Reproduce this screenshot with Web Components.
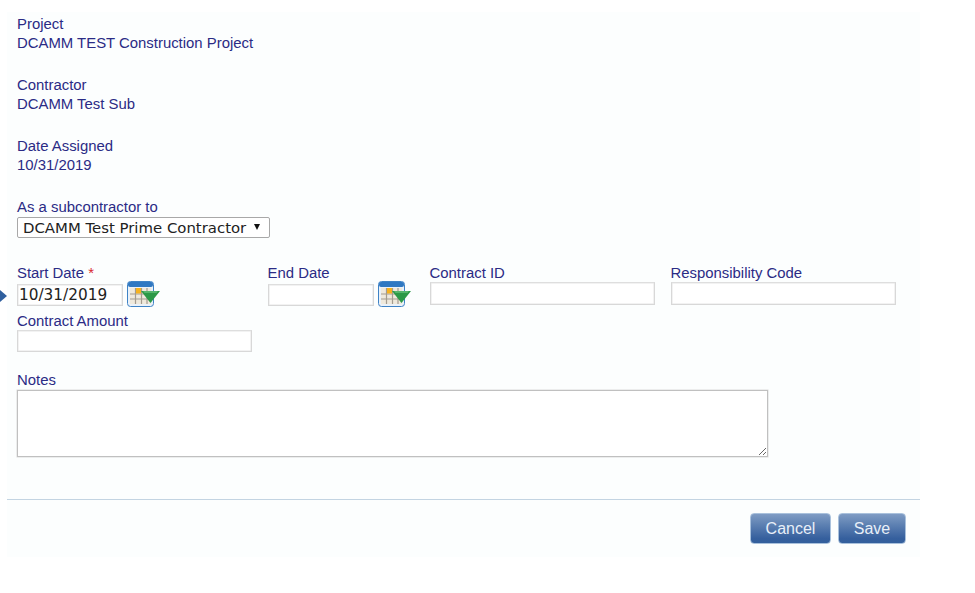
<!DOCTYPE html>
<html>
<head>
<meta charset="utf-8">
<title>Contract</title>
<style>
    html, body { margin: 0; padding: 0; background: #fff; }
    body { font: 14.9px/19px "Liberation Sans", Arial, sans-serif; color: #2b2b85; }
</style>
</head>
<body>
<contract-form>
    <read-field label="Project">DCAMM TEST Construction Project</read-field>
    <read-field label="Contractor">DCAMM Test Sub</read-field>
    <read-field label="Date Assigned">10/31/2019</read-field>
</contract-form>

<script>
const calendarSvg = `
<svg width="33" height="26" viewBox="0 0 33 26">
    <rect x="0.5" y="0.5" width="26" height="25" rx="3" fill="#eaf1f8" stroke="#3f83c6"/>
    <rect x="1" y="1" width="25" height="5" rx="2" fill="#2f78c2"/>
    <rect x="3" y="7" width="21" height="16" fill="#efe9dc"/>
    <path d="M3 13H24M3 18H24M8.5 7V23M14.5 7V23M20 7V23" stroke="#a39c90" stroke-width="1.2" fill="none"/>
    <rect x="9" y="7" width="5" height="5.5" fill="#f6b21f"/>
    <path d="M14 10H33L23.5 22Z" fill="#2c9947"/>
    <path d="M16 10H31L29.5 12H17.5Z" fill="#55b56c"/>
</svg>`;

class ReadField extends HTMLElement {
    constructor() {
        super();
        this.attachShadow({ mode: "open" }).innerHTML = `
            <style>:host { display: block; margin-bottom: 23px; }</style>
            <div>${this.getAttribute("label")}</div>
            <div><slot></slot></div>`;
    }
}

class InputField extends HTMLElement {
    constructor() {
        super();
        const required = this.hasAttribute("required") ? ' <span class="req">*</span>' : "";
        const date = this.hasAttribute("date");
        this.attachShadow({ mode: "open" }).innerHTML = `
            <style>
                :host { display: block; width: var(--w); }
                .label { height: var(--lh, 18px); }
                .req { color: #d9282f; }
                .wrap { position: relative; }
                .row { display: flex; align-items: flex-start; }
                input {
                    box-sizing: border-box;
                    width: var(--iw);
                    height: var(--ih, 23px);
                    margin: 0;
                    padding: 0 1px 0 1px;
                    background: #fff;
                    border: 1px solid #d8d8d8;
                    border-top-color: #dedede;
                    box-shadow: inset 0 0 0 0.5px #e6e6e6;
                    font: 15.3px "DejaVu Sans", Verdana, sans-serif;
                    color: #222;
                    outline: none;
                }
                .date { box-sizing: border-box; padding-top: 2px; height: 26px; }
                .date input { height: 22px; }
                .cal { display: block; margin: -3px 0 0 4px; height: 26px; }
                .pointer {
                    position: absolute; left: -17px; top: 8px;
                    border-left: 7px solid #2f5f9e;
                    border-top: 6.5px solid transparent;
                    border-bottom: 6.5px solid transparent;
                }
            </style>
            <div class="label">${this.getAttribute("label")}${required}</div>
            <div class="wrap">
                ${this.hasAttribute("current") ? '<span class="pointer"></span>' : ""}
                <div class="row ${date ? "date" : ""}">
                    <input value="${this.getAttribute("value") || ""}">
                    ${date ? `<span class="cal">${calendarSvg}</span>` : ""}
                </div>
            </div>`;
    }
}

class ActionButton extends HTMLElement {
    constructor() {
        super();
        this.attachShadow({ mode: "open" }).innerHTML = `
            <style>
                :host {
                    display: block;
                    box-sizing: border-box;
                    height: 31px;
                    width: var(--w);
                    text-align: center;
                    line-height: 29px;
                    font-size: 16px;
                    color: #e8eff8;
                    border: 1px solid #a9c1dc;
                    border-radius: 4px;
                    background: linear-gradient(#7f9cc4, #5f82b3 35%, #355f9d 85%, #33609d);
                }
            </style>
            <slot></slot>`;
    }
}

class SubcontractorSelect extends HTMLElement {
    constructor() {
        super();
        this.attachShadow({ mode: "open" }).innerHTML = `
            <style>
                :host { display: block; position: relative; width: 253px; }
                select {
                    display: block;
                    appearance: none;
                    -webkit-appearance: none;
                    box-sizing: border-box;
                    width: 253px;
                    height: 21px;
                    margin: 0;
                    padding: 0 0 0 5px;
                    background: #fff;
                    border: 1px solid #a8a8a8;
                    border-radius: 2px;
                    font: 14.9px "DejaVu Sans", Verdana, sans-serif;
                    color: #222;
                    outline: none;
                }
                .arrow {
                    position: absolute; left: 237px; top: 7px;
                    border-top: 6px solid #111;
                    border-left: 3.5px solid transparent;
                    border-right: 3.5px solid transparent;
                }
            </style>
            <select><option>DCAMM Test Prime Contractor</option></select>
            <span class="arrow"></span>`;
    }
}

class ContractForm extends HTMLElement {
    constructor() {
        super();
        this.attachShadow({ mode: "open" }).innerHTML = `
            <style>
                :host {
                    display: block;
                    box-sizing: border-box;
                    width: 913px;
                    height: 545px;
                    margin: 12px 0 0 7px;
                    background: #fcfefe;
                }
                .body { padding: 3px 0 0 10px; height: 487px; box-sizing: border-box; }
                .sub { margin-bottom: 26px; }
                .dates { display: flex; margin-bottom: 4px; }
                .amount { margin-bottom: 19px; --ih: 22px; }
                .notes { height: 19px; }
                textarea {
                    display: block;
                    box-sizing: border-box;
                    width: 751px;
                    height: 67px;
                    margin: 0;
                    background: #fff;
                    border: 1px solid #c0c0c0;
                    box-shadow: 0 0 0 0.5px #dcdcdc;
                    outline: none;
                }
                .foot {
                    border-top: 1px solid #c3d4e2;
                    display: flex;
                    justify-content: flex-end;
                    gap: 7px;
                    padding: 13px 14px 0 0;
                }
            </style>
            <div class="body">
                <slot></slot>
                <div class="sub">
                    <div>As a subcontractor to</div>
                    <subcontractor-select></subcontractor-select>
                </div>
                <div class="dates">
                    <input-field style="--w:250.5px;--iw:106px" label="Start Date" required date current value="10/31/2019"></input-field>
                    <input-field style="--w:162px;--iw:106px" label="End Date" date></input-field>
                    <input-field style="--w:241px;--iw:225px" label="Contract ID"></input-field>
                    <input-field style="--w:226px;--iw:225px" label="Responsibility Code"></input-field>
                </div>
                <input-field class="amount" style="--w:235px;--iw:235px" label="Contract Amount"></input-field>
                <div class="notes">Notes</div>
                <textarea></textarea>
            </div>
            <div class="foot">
                <action-button style="--w:81px">Cancel</action-button>
                <action-button style="--w:68px">Save</action-button>
            </div>`;
    }
}

customElements.define("read-field", ReadField);
customElements.define("input-field", InputField);
customElements.define("action-button", ActionButton);
customElements.define("subcontractor-select", SubcontractorSelect);
customElements.define("contract-form", ContractForm);
</script>
</body>
</html>
